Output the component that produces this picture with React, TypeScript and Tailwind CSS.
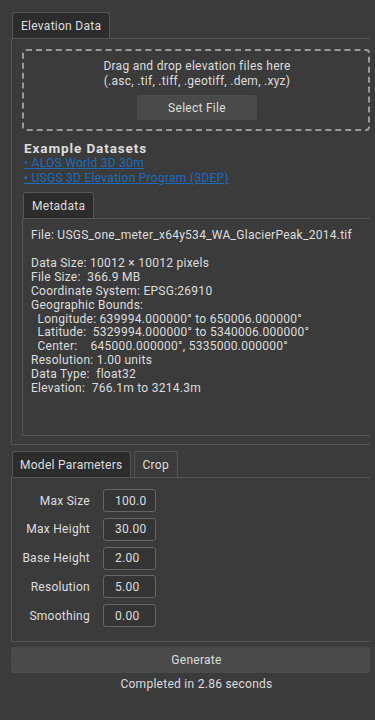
import React from 'react';

const font = { fontFamily: 'Roboto, "Noto Sans", sans-serif' };

const params = [
  { label: 'Max Size', value: '100.0' },
  { label: 'Max Height', value: '30.00' },
  { label: 'Base Height', value: '2.00' },
  { label: 'Resolution', value: '5.00' },
  { label: 'Smoothing', value: '0.00' },
];

const metaLines = [
  'Data Size: 10012 \u00d7 10012 pixels',
  'File Size:  366.9 MB',
  'Coordinate System: EPSG:26910',
  'Geographic Bounds:',
  '  Longitude: 639994.000000\u00b0 to 650006.000000\u00b0',
  '  Latitude:  5329994.000000\u00b0 to 5340006.000000\u00b0',
  '  Center:    645000.000000\u00b0, 5335000.000000\u00b0',
  'Resolution: 1.00 units',
  'Data Type:  float32',
  'Elevation:  766.1m to 3214.3m',
];

const Tab: React.FC<{ label: string; active?: boolean; className?: string }> = ({ label, active, className }) => (
  <div
    className={
      'h-[26px] flex items-center border border-b-0 border-[#555] rounded-t-[3px] ' +
      (active ? 'bg-[#2c2c2c] ' : 'bg-[#3b3b3b] ') +
      (className || 'px-[8px]')
    }
  >
    {label}
  </div>
);

const App: React.FC = () => {
  return (
    <div
      className="w-[375px] h-[720px] overflow-hidden bg-[#3b3b3b] text-[#dedede] text-[12px] leading-[14px] tracking-[0.27px]"
      style={font}
    >
      <div className="w-[359px] ml-[11px] pt-[12px]">
        {/* Elevation Data tab */}
        <div className="flex">
          <Tab label="Elevation Data" active className="ml-[1px] px-[8px]" />
        </div>
        <div className="border-l border-t border-b border-[#555] h-[407px] pl-[10px] pt-[10px]">
          <div className="border-2 border-dashed border-[#9a9a9a] rounded-[4px] h-[82px] flex flex-col items-center pt-[8px]">
            <div className="text-center pl-[2px] h-[15px] leading-[15px]">Drag and drop elevation files here</div>
            <div className="text-center pl-[2px] h-[15px] leading-[15px]">(.asc, .tif, .tiff, .geotiff, .dem, .xyz)</div>
            <div className="mt-[6px] ml-[2px] w-[120px] h-[25px] bg-[#4a4a4a] rounded-[2px] flex items-center justify-center">
              Select File
            </div>
          </div>
          <div className="mt-[10px] ml-[2px] font-bold text-[13.5px] h-[15px] leading-[15px] tracking-[0.9px]">Example Datasets</div>
          <div className="ml-[2px] h-[15px] leading-[15px] text-[#1c6bbd] underline">{'\u2022 ALOS World 3D 30m'}</div>
          <div className="ml-[2px] h-[15px] leading-[15px] text-[#1c6bbd] underline">{'\u2022 USGS 3D Elevation Program (3DEP)'}</div>

          {/* Metadata tab */}
          <div className="flex mt-[6px]">
            <Tab label="Metadata" active className="ml-[1px] px-[8px]" />
          </div>
          <div className="border-l border-t border-b border-[#555] h-[218px] pl-[8px] pt-[9px] whitespace-pre">
            <div>File: USGS_one_meter_x64y534_WA_GlacierPeak_2014.tif</div>
            <div className="h-[14px]" />
            {metaLines.map((l, i) => (
              <div key={i} className="h-[13.9px]">{l}</div>
            ))}
          </div>
        </div>

        {/* Model Parameters */}
        <div className="flex mt-[6px] gap-[3px]">
          <Tab label="Model Parameters" active className="ml-[1px] px-[7px]" />
          <Tab label="Crop" className="px-[8px]" />
        </div>
        <div className="border-l border-t border-b border-[#555] h-[165px] pt-[11px]">
          <div className="flex flex-col gap-[5.75px]">
            {params.map((p) => (
              <div key={p.label} className="flex items-center">
                <div className="w-[78px] text-right">{p.label}</div>
                <div className="ml-[13px] w-[53px] h-[23px] border border-[#666] rounded-[3px] bg-[#353535] flex items-center pl-[11px]">
                  {p.value}
                </div>
              </div>
            ))}
          </div>
        </div>

        <div className="mt-[5px] h-[26px] bg-[#4a4a4a] rounded-[2px] flex items-center justify-center pl-[12px]">
          Generate
        </div>
        <div className="mt-[4px] text-center pl-[12px]">Completed in 2.86 seconds</div>
      </div>
    </div>
  );
};

export default App;
